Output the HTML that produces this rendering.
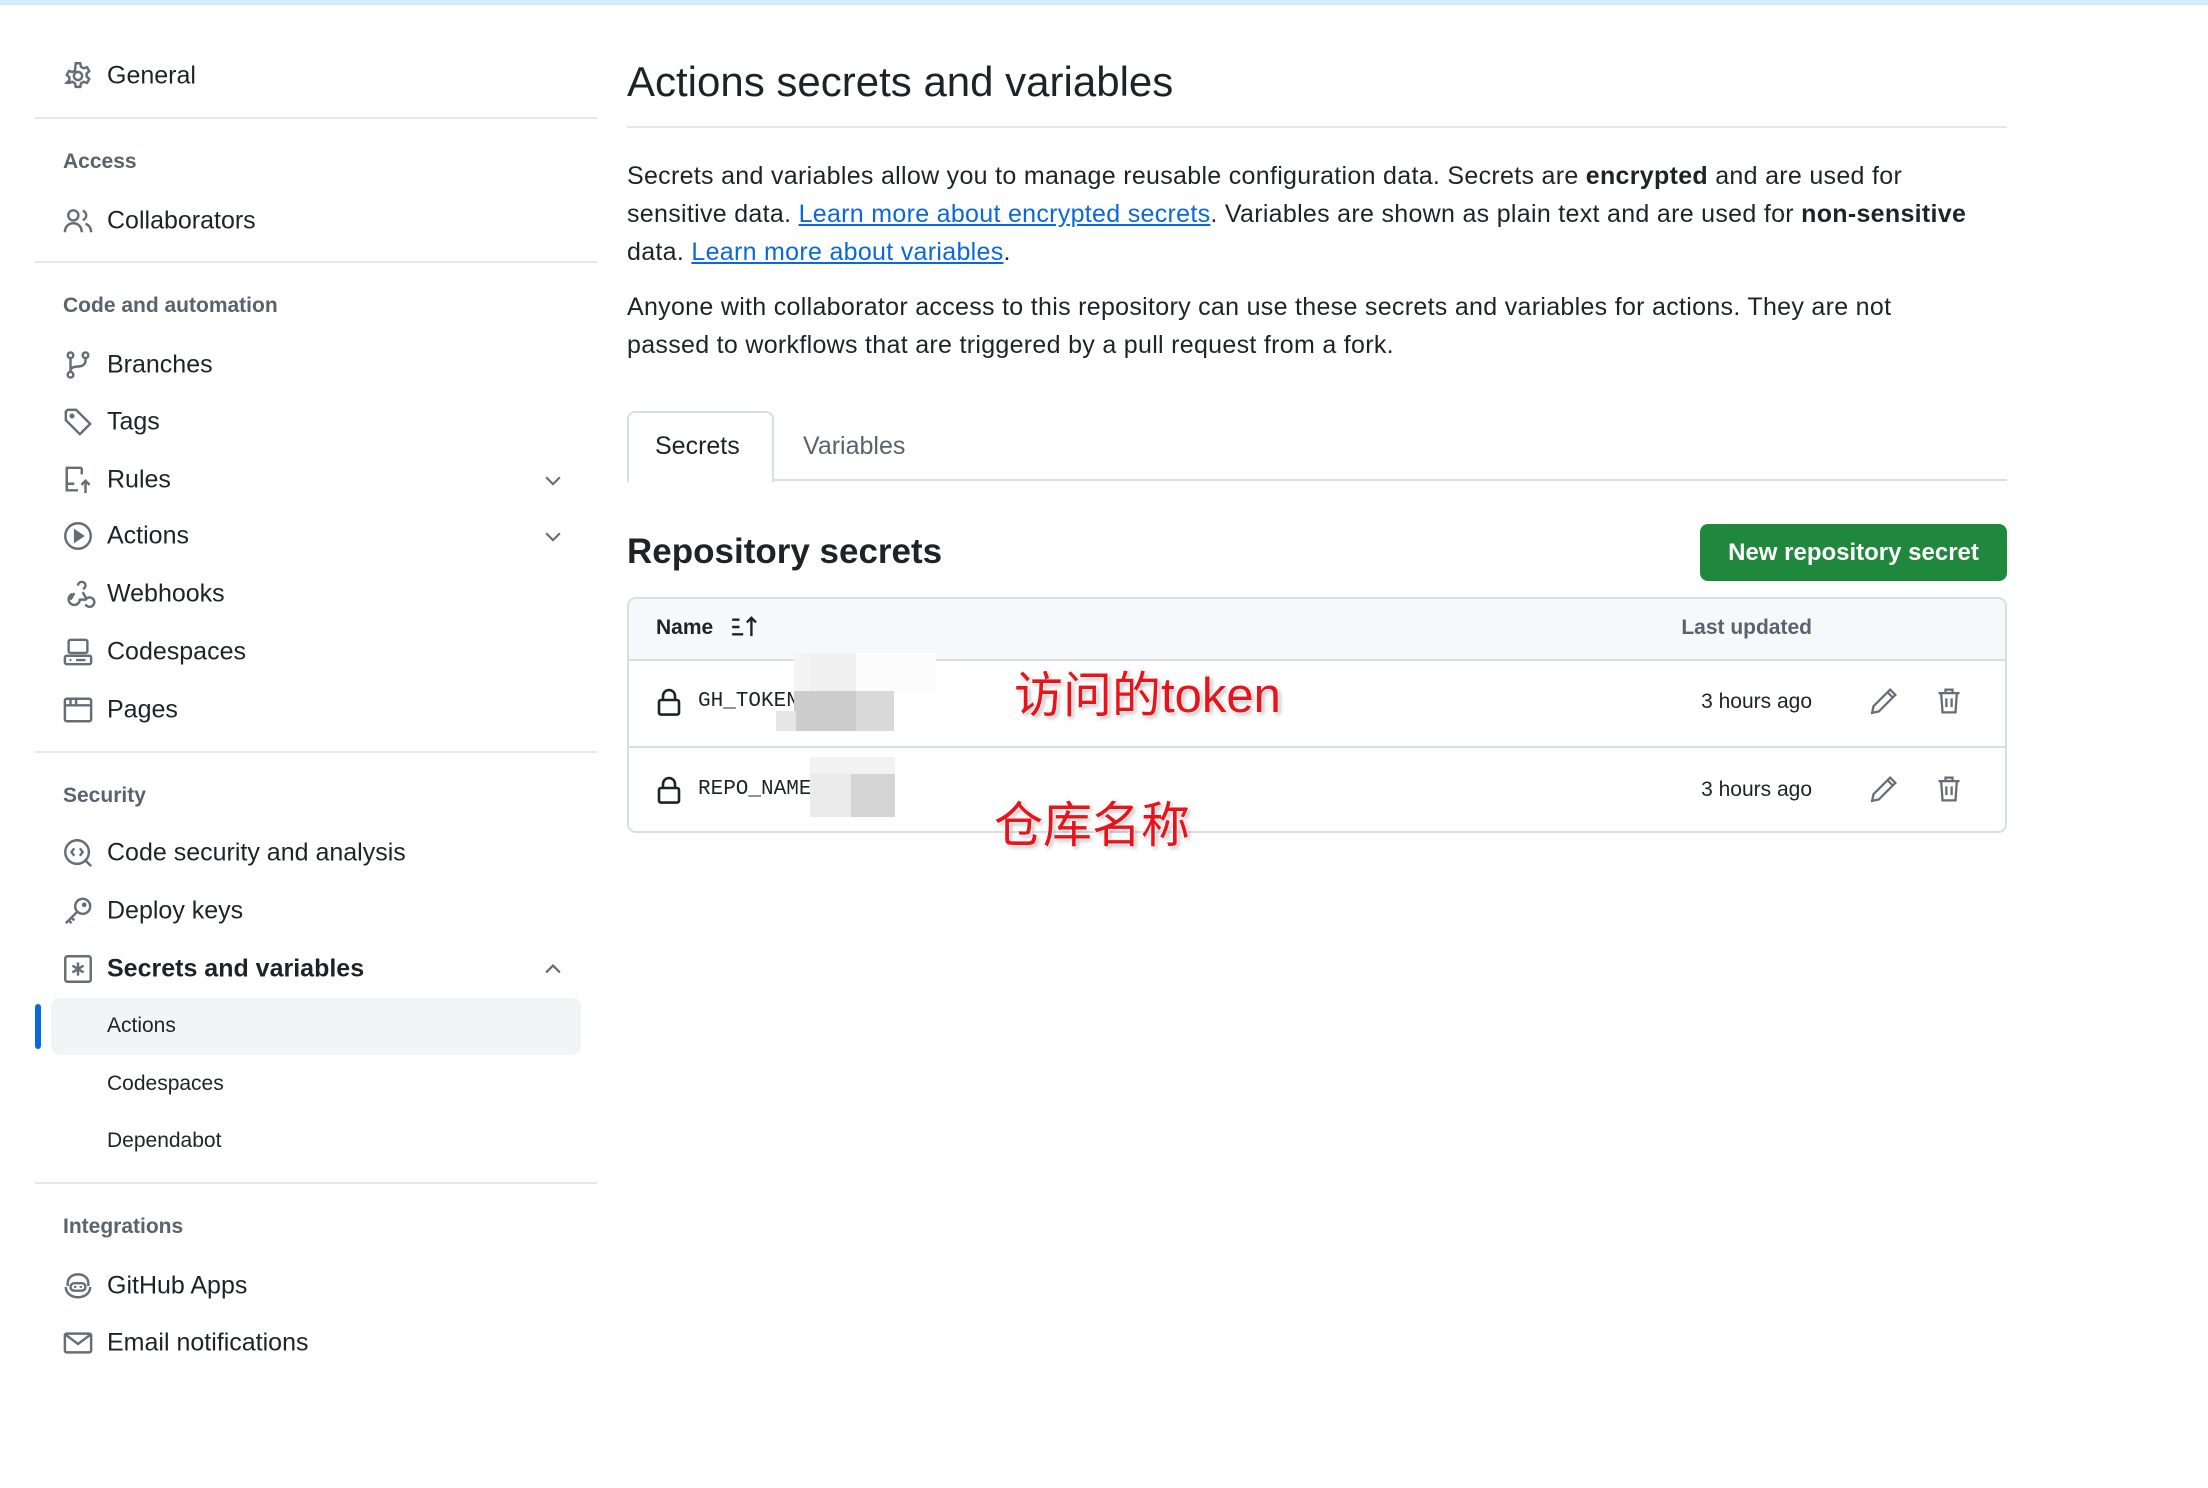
<!DOCTYPE html>
<html><head><meta charset="utf-8"><style>
*{margin:0;padding:0;box-sizing:border-box}
body{width:2208px;height:1488px;background:#fff;font-family:"Liberation Sans","Noto Sans CJK SC",sans-serif;color:#1f2328;position:relative;overflow:hidden}
.a{position:absolute;white-space:nowrap}
.it{position:absolute;left:107px;font-size:25px;transform:translateY(-50%)}
.ic{position:absolute;left:63px;width:30px;height:30px;transform:translateY(-50%)}
.hd{position:absolute;left:63px;font-size:21px;font-weight:bold;color:#59636e;transform:translateY(-50%)}
.sub{position:absolute;left:107px;font-size:21px;transform:translateY(-50%)}
.hr{position:absolute;left:35px;width:562px;height:2px;background:#e6e8eb}
.chev{position:absolute;left:542px;width:22px;height:22px;transform:translateY(-50%)}
svg{overflow:visible}
.p{position:absolute;left:627px;font-size:25px;letter-spacing:0.3px;line-height:38px;width:1420px}
a{color:#0969da;text-decoration:underline}
.ann{position:absolute;color:#e8141b;font-size:49px;text-shadow:0 0 3px #fff,0 0 3px #fff,2px 2px 4px rgba(0,0,0,.35)}
.px{position:absolute}
.r{position:absolute;right:396px;font-size:21px;white-space:nowrap}
</style></head><body>
<div class="a" style="left:0;top:0;width:2208px;height:5px;background:#d4ebfb"></div>

<svg class="ic" style="top:76px" viewBox="0 0 16 16" fill="none" stroke="#656d76" stroke-width="1.3"><circle cx="8" cy="8" r="2.2"/><path d="M6.8 1.2h2.4l.4 1.9 1.4.8 1.8-.6 1.2 2.1-1.4 1.3v1.6l1.4 1.3-1.2 2.1-1.8-.6-1.4.8-.4 1.9H6.8l-.4-1.9-1.4-.8-1.8.6L2 11.6l1.4-1.3V8.7L2 7.4l1.2-2.1 1.8.6 1.4-.8z"/></svg>
<div class="it" style="top:76px">General</div>
<div class="hr" style="top:117px"></div>
<div class="hd" style="top:162px">Access</div>
<svg class="ic" style="top:221px" viewBox="0 0 16 16" fill="none" stroke="#656d76" stroke-width="1.3"><circle cx="5.5" cy="5" r="2.7"/><path d="M1 14c0-3 2-4.8 4.5-4.8S10 11 10 14M10.5 2.5a2.6 2.6 0 010 5M12 9.5c1.8.6 3 2.2 3 4.5"/></svg>
<div class="it" style="top:221px">Collaborators</div>
<div class="hr" style="top:261px"></div>
<div class="hd" style="top:306px">Code and automation</div>
<svg class="ic" style="top:365px" viewBox="0 0 16 16" fill="none" stroke="#656d76" stroke-width="1.3"><circle cx="4" cy="2.8" r="1.5"/><circle cx="4" cy="13.2" r="1.5"/><circle cx="12" cy="2.8" r="1.5"/><path d="M4 4.3v7.4M12 4.3v1.5c0 2-2 3-4 3S4 9.5 4 11"/></svg>
<div class="it" style="top:365px">Branches</div>
<svg class="ic" style="top:422px" viewBox="0 0 16 16" fill="none" stroke="#656d76" stroke-width="1.3"><path d="M1.5 2.5v4.5l7.5 7.5 5.5-5.5L7 1.5H2.5z"/><circle cx="4.8" cy="4.8" r=".7" fill="#656d76"/></svg>
<div class="it" style="top:422px">Tags</div>
<svg class="ic" style="top:480px" viewBox="0 0 16 16" fill="none" stroke="#656d76" stroke-width="1.3"><path d="M10 1.5H2v12h6M2 10h4M12 15V8.5M9.8 10.6L12 8.4l2.2 2.2M10 1.5v3.5"/></svg>
<div class="it" style="top:480px">Rules</div>
<svg class="chev" style="top:480px" viewBox="0 0 16 16" fill="none" stroke="#656d76" stroke-width="1.6"><path d="M3 6l5 5 5-5"/></svg>
<svg class="ic" style="top:536px" viewBox="0 0 16 16" fill="none" stroke="#656d76" stroke-width="1.3"><circle cx="8" cy="8" r="6.8"/><path d="M6.5 5.3v5.4L10.5 8z" fill="#656d76"/></svg>
<div class="it" style="top:536px">Actions</div>
<svg class="chev" style="top:536px" viewBox="0 0 16 16" fill="none" stroke="#656d76" stroke-width="1.6"><path d="M3 6l5 5 5-5"/></svg>
<svg class="ic" style="top:594px" viewBox="0 0 16 16" fill="none" stroke="#656d76" stroke-width="1.3"><path d="M6 7.5L4 11M8 3.5a2 2 0 114 0c0 1-1 1.7-1.2 2M5 8a3 3 0 104 3h3.5M10.5 7l2 3.5a2.5 2.5 0 11-.5 3"/></svg>
<div class="it" style="top:594px">Webhooks</div>
<svg class="ic" style="top:652px" viewBox="0 0 16 16" fill="none" stroke="#656d76" stroke-width="1.3"><rect x="3" y="1.5" width="10" height="7" rx="1"/><rect x="1" y="10" width="14" height="4.5" rx="1"/><path d="M3.5 12.3h1M7 12.3h5"/></svg>
<div class="it" style="top:652px">Codespaces</div>
<svg class="ic" style="top:710px" viewBox="0 0 16 16" fill="none" stroke="#656d76" stroke-width="1.3"><rect x="1" y="2" width="14" height="12" rx="1"/><path d="M1 5.5h14M4 2v3.5M7 2v3.5"/></svg>
<div class="it" style="top:710px">Pages</div>
<div class="hr" style="top:751px"></div>
<div class="hd" style="top:796px">Security</div>
<svg class="ic" style="top:853px" viewBox="0 0 16 16" fill="none" stroke="#656d76" stroke-width="1.3"><circle cx="7.5" cy="7.5" r="6.3"/><path d="M12 12l3 3M6 5.5L4.5 7.5 6 9.5M9 5.5l1.5 2L9 9.5"/></svg>
<div class="it" style="top:853px">Code security and analysis</div>
<svg class="ic" style="top:911px" viewBox="0 0 16 16" fill="none" stroke="#656d76" stroke-width="1.3"><circle cx="10.5" cy="5.5" r="4"/><circle cx="11.3" cy="4.7" r=".6" fill="#656d76"/><path d="M7.7 8.3L1.5 14.5M3 13l1.5 1.5M4.5 11.5L6 13"/></svg>
<div class="it" style="top:911px">Deploy keys</div>
<svg class="ic" style="top:969px" viewBox="0 0 16 16" fill="none" stroke="#656d76" stroke-width="1.3"><rect x="1.2" y="1.2" width="13.6" height="13.6" rx="1.2"/><path d="M8 4.5v7M5 6.2l6 3.6M11 6.2L5 9.8"/></svg>
<div class="it" style="top:969px;font-weight:bold">Secrets and variables</div>
<svg class="chev" style="top:969px" viewBox="0 0 16 16" fill="none" stroke="#656d76" stroke-width="1.6"><path d="M3 10.5l5-5 5 5"/></svg>
<div class="a" style="left:51px;top:998px;width:530px;height:57px;background:#f3f4f6;border-radius:8px"></div>
<div class="a" style="left:35px;top:1004px;width:6px;height:45px;background:#0969da;border-radius:3px"></div>
<div class="sub" style="top:1026px">Actions</div>
<div class="sub" style="top:1084px">Codespaces</div>
<div class="sub" style="top:1141px">Dependabot</div>
<div class="hr" style="top:1182px"></div>
<div class="hd" style="top:1227px">Integrations</div>
<svg class="ic" style="top:1286px" viewBox="0 0 16 16" fill="none" stroke="#656d76" stroke-width="1.3"><path d="M2.5 8V6.5C2.5 3.5 5 1.8 8 1.8s5.5 1.7 5.5 4.7V8M1.5 8.5c0 3 2.5 5.5 6.5 5.5s6.5-2.5 6.5-5.5"/><rect x="4" y="6.5" width="8" height="4" rx="2"/><path d="M6.5 8v1M9.5 8v1"/></svg>
<div class="it" style="top:1286px">GitHub Apps</div>
<svg class="ic" style="top:1343px" viewBox="0 0 16 16" fill="none" stroke="#656d76" stroke-width="1.3"><rect x="1" y="3" width="14" height="10" rx="1"/><path d="M1.3 3.5L8 8.5l6.7-5"/></svg>
<div class="it" style="top:1343px">Email notifications</div>

<div class="a" style="left:627px;top:58px;font-size:42px">Actions secrets and variables</div>
<div class="a" style="left:627px;top:126px;width:1380px;height:2px;background:#e6e8eb"></div>
<div class="p" style="top:157px">Secrets and variables allow you to manage reusable configuration data. Secrets are <b>encrypted</b> and are used for<br>sensitive data. <a>Learn more about encrypted secrets</a>. Variables are shown as plain text and are used for <b>non-sensitive</b><br>data. <a>Learn more about variables</a>.</div>
<div class="p" style="top:288px">Anyone with collaborator access to this repository can use these secrets and variables for actions. They are not<br>passed to workflows that are triggered by a pull request from a fork.</div>

<div class="a" style="left:627px;top:479px;width:1380px;height:2px;background:#d8dee4"></div>
<div class="a" style="left:627px;top:411px;width:147px;height:71px;background:#fff;border:2px solid #d8dee4;border-bottom:none;border-radius:8px 8px 0 0"></div>
<div class="a" style="left:655px;top:432px;font-size:25px">Secrets</div>
<div class="a" style="left:803px;top:432px;font-size:25px;color:#59636e">Variables</div>

<div class="a" style="left:627px;top:532px;font-size:35px;font-weight:bold">Repository secrets</div>
<div class="a" style="left:1700px;top:524px;width:307px;height:57px;background:#1f883d;border-radius:8px;color:#fff;font-size:24px;font-weight:bold;text-align:center;line-height:57px">New repository secret</div>

<div class="a" style="left:627px;top:597px;width:1380px;height:236px;border:2px solid #d8dee4;border-radius:9px;overflow:hidden">
 <div style="height:62px;background:#f6f8fa;border-bottom:2px solid #d8dee4"></div>
 <div style="height:87px;border-bottom:2px solid #d8dee4"></div>
</div>
<div class="a" style="left:656px;top:616px;font-size:21px;font-weight:bold">Name</div>
<svg class="a" style="left:730px;top:616px;width:30px;height:22px" viewBox="0 0 16 12" fill="none" stroke="#1f2328" stroke-width="1.3"><path d="M1 2h4M1 6h4M1 10h6M11.5 11V1M9 3.5l2.5-2.5 2.5 2.5"/></svg>
<div class="r" style="top:616px;font-weight:bold;color:#59636e">Last updated</div>

<svg class="a" style="left:657px;top:688px;width:24px;height:28px" viewBox="0 0 12 14" fill="none" stroke="#1f2328" stroke-width="1.3"><rect x="1" y="6" width="10" height="7.3" rx="1"/><path d="M3 6V4a3 3 0 016 0v2"/></svg>
<div class="a" style="left:698px;top:690px;font-family:'Liberation Mono',monospace;font-size:21px">GH_TOKEN</div>
<svg class="a" style="left:657px;top:776px;width:24px;height:28px" viewBox="0 0 12 14" fill="none" stroke="#1f2328" stroke-width="1.3"><rect x="1" y="6" width="10" height="7.3" rx="1"/><path d="M3 6V4a3 3 0 016 0v2"/></svg>
<div class="a" style="left:698px;top:778px;font-family:'Liberation Mono',monospace;font-size:21px">REPO_NAME</div>
<div class="px" style="left:794px;top:653px;width:62px;height:40px;background:#f4f4f4"></div>
<div class="px" style="left:811px;top:653px;width:45px;height:40px;background:#f0f0f0"></div>
<div class="px" style="left:856px;top:653px;width:80px;height:40px;background:#fcfcfc"></div>
<div class="px" style="left:794px;top:691px;width:100px;height:40px;background:#cdcdcd"></div>
<div class="px" style="left:856px;top:691px;width:38px;height:40px;background:#d9d9d9"></div>
<div class="px" style="left:776px;top:711px;width:20px;height:20px;background:#e6e6e6"></div>
<div class="px" style="left:810px;top:757px;width:85px;height:60px;background:#f2f2f2"></div>
<div class="px" style="left:851px;top:774px;width:44px;height:43px;background:#d4d4d4"></div>
<div class="px" style="left:810px;top:774px;width:41px;height:43px;background:#ebebeb"></div>

<div class="r" style="top:690px">3 hours ago</div>
<div class="r" style="top:778px">3 hours ago</div>
<svg class="a" style="left:1870px;top:687px;width:28px;height:28px" viewBox="0 0 16 16" fill="none" stroke="#656d76" stroke-width="1.3"><path d="M11.5 1.5l3 3L5 14l-3.8.8L2 11zM10 3l3 3"/></svg>
<svg class="a" style="left:1936px;top:687px;width:26px;height:28px" viewBox="0 0 14 16" fill="none" stroke="#656d76" stroke-width="1.3"><path d="M1 3.5h12M5 3.5V1.5h4v2M2.5 3.5l.8 11h7.4l.8-11M5.5 6.5v5M8.5 6.5v5"/></svg>
<svg class="a" style="left:1870px;top:775px;width:28px;height:28px" viewBox="0 0 16 16" fill="none" stroke="#656d76" stroke-width="1.3"><path d="M11.5 1.5l3 3L5 14l-3.8.8L2 11zM10 3l3 3"/></svg>
<svg class="a" style="left:1936px;top:775px;width:26px;height:28px" viewBox="0 0 14 16" fill="none" stroke="#656d76" stroke-width="1.3"><path d="M1 3.5h12M5 3.5V1.5h4v2M2.5 3.5l.8 11h7.4l.8-11M5.5 6.5v5M8.5 6.5v5"/></svg>

<div class="ann" style="left:1014px;top:656px">访问的token</div>
<div class="ann" style="left:994px;top:786px">仓库名称</div>
</body></html>
